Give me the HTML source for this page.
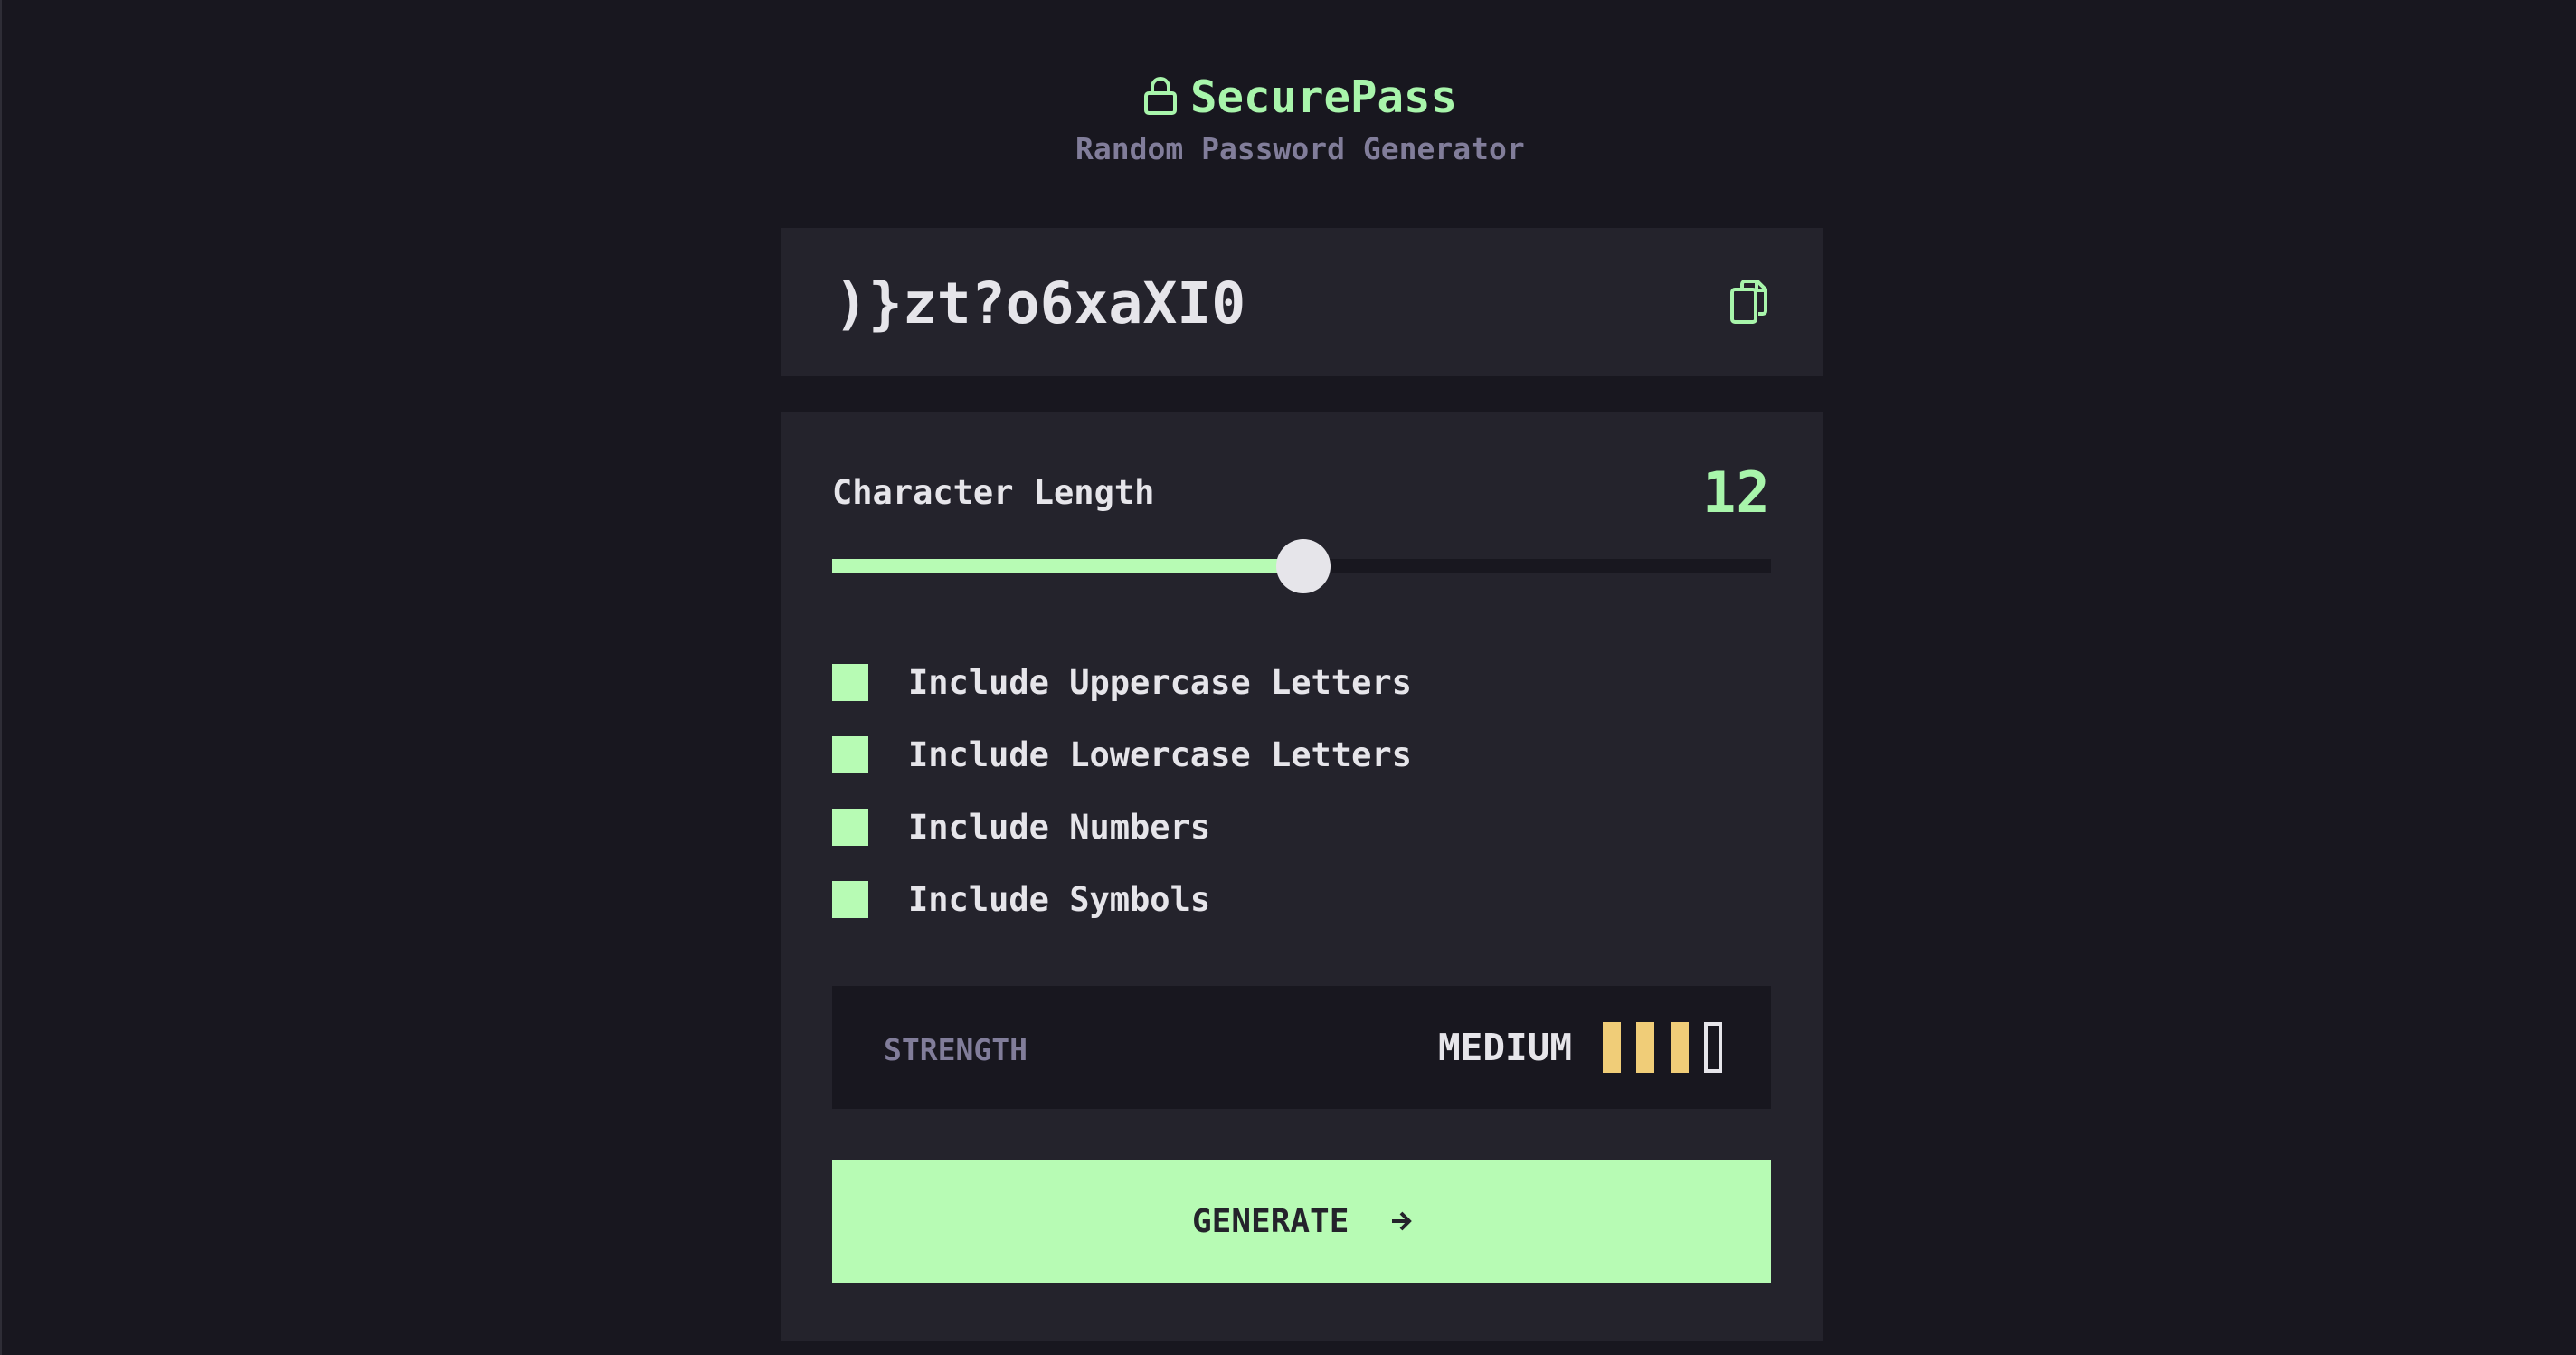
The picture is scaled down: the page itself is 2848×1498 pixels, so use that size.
<!DOCTYPE html>
<html><head><meta charset="utf-8"><style>
*{margin:0;padding:0;box-sizing:border-box}
body{width:2848px;height:1498px;background:#18171f;position:relative;overflow:hidden;font-family:"DejaVu Sans Mono","Liberation Mono",monospace;font-weight:bold;color:#e6e5ea}
.a{position:absolute;white-space:pre;line-height:1}
.card{position:absolute;background:#24232c}
</style></head><body>
<div style="position:absolute;left:0;top:0;width:2px;height:1498px;background:#2e2d36"></div>
<svg class="a" style="left:1264px;top:84px" width="40" height="44" viewBox="0 0 40 44"><rect x="3" y="19" width="32" height="22" rx="3" fill="none" stroke="#a8f5ab" stroke-width="4"/><path d="M10 19V12a9 9 0 0 1 18 0v7" fill="none" stroke="#a8f5ab" stroke-width="4"/></svg>
<div class="a" style="left:1316px;top:83px;font-size:49px;color:#a8f5ab">SecurePass</div>
<div class="a" style="left:1189px;top:148px;font-size:33px;color:#817d9a">Random Password Generator</div>
<div class="card" style="left:864px;top:252px;width:1152px;height:164px"></div>
<div class="a" style="left:922px;top:304px;font-size:63px;color:#e6e5ea">)}zt?o6xaXI0</div>
<svg class="a" style="left:1910px;top:308px" width="46" height="52" viewBox="0 0 46 52"><path d="M16 10V6a3 3 0 0 1 3-3h14l9 9v24a3 3 0 0 1-3 3h-5" fill="none" stroke="#a8f5ab" stroke-width="4"/><rect x="5" y="12" width="26" height="36" rx="3" fill="none" stroke="#a8f5ab" stroke-width="4"/><path d="M32 3v10h10" fill="none" stroke="#a8f5ab" stroke-width="4"/></svg>
<div class="card" style="left:864px;top:456px;width:1152px;height:1026px"></div>
<div class="a" style="left:920px;top:526px;font-size:37px">Character Length</div>
<div class="a" style="left:1882px;top:514px;font-size:62px;color:#a8f5ab">12</div>
<div style="position:absolute;left:920px;top:618px;width:1038px;height:16px;background:#18171f"></div>
<div style="position:absolute;left:920px;top:618px;width:521px;height:16px;background:#b7fbb4"></div>
<div style="position:absolute;left:1411px;top:596px;width:60px;height:60px;border-radius:50%;background:#e6e5ea"></div>
<div style="position:absolute;left:920px;top:734px;width:40px;height:41px;background:#b7fbb4"></div>
<div style="position:absolute;left:920px;top:814px;width:40px;height:41px;background:#b7fbb4"></div>
<div style="position:absolute;left:920px;top:894px;width:40px;height:41px;background:#b7fbb4"></div>
<div style="position:absolute;left:920px;top:974px;width:40px;height:41px;background:#b7fbb4"></div>
<div class="a" style="left:1004px;top:736px;font-size:37px">Include Uppercase Letters</div>
<div class="a" style="left:1004px;top:816px;font-size:37px">Include Lowercase Letters</div>
<div class="a" style="left:1004px;top:896px;font-size:37px">Include Numbers</div>
<div class="a" style="left:1004px;top:976px;font-size:37px">Include Symbols</div>
<div style="position:absolute;left:920px;top:1090px;width:1038px;height:136px;background:#18171f"></div>
<div class="a" style="left:977px;top:1144px;font-size:33px;color:#817d9a">STRENGTH</div>
<div class="a" style="left:1590px;top:1138px;font-size:41px">MEDIUM</div>
<div style="position:absolute;left:1772px;top:1130px;width:20px;height:56px;background:#f0cd78"></div>
<div style="position:absolute;left:1809px;top:1130px;width:20px;height:56px;background:#f0cd78"></div>
<div style="position:absolute;left:1847px;top:1130px;width:20px;height:56px;background:#f0cd78"></div>
<div style="position:absolute;left:1884px;top:1130px;width:20px;height:56px;border:4px solid #e6e5ea"></div>
<div style="position:absolute;left:920px;top:1282px;width:1038px;height:136px;background:#b7fbb4"></div>
<div class="a" style="left:1318px;top:1333px;font-size:36px;color:#24232b">GENERATE</div>
<svg class="a" style="left:1536px;top:1336px" width="26" height="28" viewBox="0 0 26 28"><path d="M3 14h19M13 5l9 9-9 9" fill="none" stroke="#24232b" stroke-width="4"/></svg>
</body></html>
